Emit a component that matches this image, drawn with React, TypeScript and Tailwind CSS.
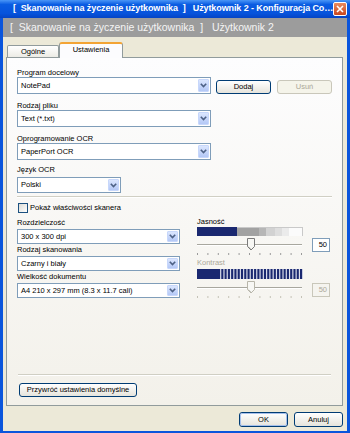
import React from "react";

const Chevron = ({ color = "#4d6185" }: { color?: string }) => (
  <svg width="7" height="5" viewBox="0 0 7 5">
    <path d="M0.8 0.8 L3.5 3.6 L6.2 0.8" fill="none" stroke={color} strokeWidth="1.6" />
  </svg>
);

function Combo({ className, text }: { className: string; text: string }) {
  return (
    <div className={`flex items-stretch bg-white border border-[#7f9db9] ${className}`}>
      <div className="flex-1 flex items-center pl-[3px] overflow-hidden whitespace-nowrap">{text}</div>
      <div className="m-px w-[11px] rounded-[1px] bg-gradient-to-b from-[#dbe6fe] to-[#b4c8f6] border border-[#c7d7fb] flex items-center justify-center">
        <Chevron />
      </div>
    </div>
  );
}

function XPButton({
  className,
  children,
  disabled,
  def,
}: {
  className: string;
  children: React.ReactNode;
  disabled?: boolean;
  def?: boolean;
}) {
  if (disabled) {
    return (
      <div className={`flex items-center justify-center rounded-[3px] border border-[#c9c7ba] bg-[#f5f4ea] text-[#aca899] ${className}`}>
        {children}
      </div>
    );
  }
  return (
    <div className={`rounded-[3px] border border-[#003c74] bg-gradient-to-b from-[#ffffff] to-[#e6e4dc] ${className}`}>
      <div
        className={`w-full h-full flex items-center justify-center rounded-[2px] ${
          def ? "border border-[#a6c0ec]" : "border border-transparent"
        }`}
      >
        {children}
      </div>
    </div>
  );
}

function Slider({ disabled }: { disabled?: boolean }) {
  const ticks = Array.from({ length: 11 }, (_, i) => 1 + i * 10.4);
  const tick = disabled ? "#c4c2b6" : "#9a9a9a";
  return (
    <svg width="108" height="20" viewBox="0 0 108 20">
      <line x1="1" y1="6.5" x2="106" y2="6.5" stroke="#a8a79f" />
      <line x1="1" y1="7.5" x2="106" y2="7.5" stroke="#ffffff" />
      {ticks.map((t, i) => (
        <line key={i} x1={t + 0.5} y1="15" x2={t + 0.5} y2="17" stroke={tick} />
      ))}
      <path
        d="M51.5 0.5 H58.5 V8.5 L55 12 L51.5 8.5 Z"
        fill="#f7f7f4"
        stroke={disabled ? "#b8b6aa" : "#7a7a7a"}
      />
      <line x1="52.5" y1="8.5" x2="55" y2="11" stroke="#c8c8c0" />
    </svg>
  );
}

function BrightBar() {
  const segs: [number, number, string][] = [
    [0, 40, "#1a2870"],
    [40, 62, "#a2a2a2"],
    [62, 69, "#b6b6b6"],
    [69, 78, "#d2d2d2"],
    [78, 85, "#dedede"],
    [85, 92, "#ebebeb"],
    [92, 105, "#fbfbfb"],
  ];
  return (
    <svg width="106" height="10" viewBox="0 0 106 10">
      {segs.map(([a, b, c], i) => (
        <rect key={i} x={a} y={0} width={b - a} height={10} fill={c} />
      ))}
      <rect x="0.5" y="0.5" width="105" height="9" fill="none" stroke="#c9c9c9" />
      <rect x="0" y="0" width="40" height="10" fill="#1a2870" />
    </svg>
  );
}

function ContrastBar() {
  const stripes = Array.from({ length: 26 }, (_, i) => 21 + i * 3.28);
  return (
    <svg width="106" height="10" viewBox="0 0 106 10">
      <rect x="0" y="0" width="106" height="10" fill="#dde0ec" />
      <rect x="0" y="0" width="22" height="10" fill="#1a2870" />
      {stripes.map((s, i) => (
        <rect key={i} x={s} y={0} width={2.1} height={10} fill="#1a2870" />
      ))}
    </svg>
  );
}

function Label({ children, className = "" }: { children: React.ReactNode; className?: string }) {
  return <div className={`h-[8px] leading-[8px] whitespace-nowrap ${className}`}>{children}</div>;
}

export default function App() {
  return (
    <div className="w-[350px] h-[433px] overflow-hidden bg-[#0a55dc] flex flex-col font-['Liberation_Sans',Arial,sans-serif] text-[7.5px] text-black">
      {/* Title bar */}
      <div className="h-[18px] shrink-0 flex items-center bg-[linear-gradient(to_bottom,#4a96f7_0%,#0a5ce2_25%,#0653dc_75%,#0544c4_100%)] pl-[13px] pr-[3px]">
        <div className="flex-1 text-white font-bold text-[9px] whitespace-pre overflow-hidden tracking-[-0.1px]">
          {"[  Skanowanie na życzenie użytkownika  ]   Użytkownik 2 - Konfiguracja Co…"}
        </div>
        <div className="w-[14px] h-[14px] rounded-[2px] border border-white bg-gradient-to-b from-[#e98a5e] to-[#c9461d] flex items-center justify-center">
          <svg width="8" height="8" viewBox="0 0 8 8">
            <path d="M1 1 L7 7 M7 1 L1 7" stroke="white" strokeWidth="1.6" />
          </svg>
        </div>
      </div>

      {/* Window body */}
      <div className="flex-1 mx-[3px] mb-[2px] bg-[#ece9d8] flex flex-col">
        {/* Gray header */}
        <div className="h-[19px] shrink-0 bg-[#9c9c9c] flex items-center pl-[7px] text-[#f4f4f4] text-[10.5px] whitespace-pre">
          {"[  Skanowanie na życzenie użytkownika  ]   Użytkownik 2"}
        </div>

        {/* Tabs + panel */}
        <div className="pl-[3px] pr-[4px] pt-[5px] flex flex-col">
          <div className="relative z-10 -mb-px h-[16px] flex items-end pl-px">
            <div className="mb-px h-[12px] w-[52px] flex items-center justify-center rounded-t-[2px] border border-b-0 border-[#919b9c] bg-gradient-to-b from-[#ffffff] to-[#ecebe5]">
              Ogólne
            </div>
            <div className="h-[16px] w-[64px] flex items-center justify-center rounded-t-[3px] border-x border-[#919b9c] border-t-[2px] border-t-[#f3a435] bg-[#fcfcfe] pb-[2px]">
              Ustawienia
            </div>
          </div>

          <div className="h-[349px] border border-[#919b9c] bg-gradient-to-b from-[#fdfdfe] to-[#f3f1ea] px-[10px] pt-[11px] pb-[8px] flex flex-col">
            <Label>Program docelowy</Label>
            <div className="flex items-center">
              <Combo className="w-[194px] h-[17px]" text="NotePad" />
              <XPButton className="ml-[5px] mt-[3px] w-[55px] h-[14px]">Dodaj</XPButton>
              <XPButton disabled className="ml-[6px] mt-[3px] w-[55px] h-[14px]">
                Usuń
              </XPButton>
            </div>

            <Label className="mt-[8px]">Rodzaj pliku</Label>
            <Combo className="w-[194px] h-[17px]" text="Text (*.txt)" />

            <Label className="mt-[8px]">Oprogramowanie OCR</Label>
            <Combo className="w-[194px] h-[17px]" text="PaperPort OCR" />

            <Label className="mt-[6px]">Język OCR</Label>
            <Combo className="mt-[3px] w-[104px] h-[16px]" text="Polski" />

            <div className="mt-[3px] h-[2px] border-t border-[#d0cfc4] border-b border-b-white" />

            <div className="mt-[5px] h-[10px] flex items-center">
              <div className="ml-px w-[10px] h-[10px] border border-[#1c5180] bg-gradient-to-br from-[#dcdcd6] to-[#ffffff]" />
              <div className="ml-[2px] whitespace-nowrap">Pokaż właściwości skanera</div>
            </div>

            <div className="mt-[5px] flex">
              <div className="w-[163px] pt-px flex flex-col">
                <Label>Rozdzielczość</Label>
                <Combo className="mt-[2px] w-[163px] h-[15px]" text="300 x 300 dpi" />
                <Label className="mt-[2px]">Rodzaj skanowania</Label>
                <Combo className="mt-[2px] w-[163px] h-[15px]" text="Czarny i biały" />
                <Label className="mt-[2px]">Wielkość dokumentu</Label>
                <Combo className="mt-[2px] w-[163px] h-[15px]" text="A4 210 x 297 mm (8.3 x 11.7 cali)" />
              </div>

              <div className="ml-[16px] flex flex-col">
                <Label className="ml-px">Jasność</Label>
                <div className="mt-px ml-px h-[9px] overflow-hidden">
                  <BrightBar />
                </div>
                <div className="mt-[2px] flex items-start">
                  <Slider />
                  <div className="ml-[8px] w-[18px] h-[14px] border border-[#7f9db9] bg-white flex items-center justify-end pr-[2px]">
                    50
                  </div>
                </div>
                <Label className="mt-px ml-px text-[#aca899]">Kontrast</Label>
                <div className="mt-[2px] ml-px h-[10px]">
                  <ContrastBar />
                </div>
                <div className="mt-[2px] flex items-start">
                  <Slider disabled />
                  <div className="ml-[8px] mt-[2px] w-[18px] h-[14px] border border-[#c9c7ba] bg-[#f5f4ef] text-[#aca899] flex items-center justify-end pr-[2px]">
                    50
                  </div>
                </div>
              </div>
            </div>

            <div className="mt-auto ml-px mr-px h-[2px] border-t border-[#d0cfc4] border-b border-b-white" />
            <XPButton className="mt-[7px] ml-[2px] w-[118px] h-[14px]">Przywróć ustawienia domyślne</XPButton>
          </div>
        </div>

        {/* Bottom buttons */}
        <div className="mt-[6px] flex justify-end pr-[4px]">
          <XPButton def className="w-[49px] h-[15px]">
            OK
          </XPButton>
          <XPButton className="ml-[6px] w-[49px] h-[15px]">Anuluj</XPButton>
        </div>
      </div>
    </div>
  );
}
